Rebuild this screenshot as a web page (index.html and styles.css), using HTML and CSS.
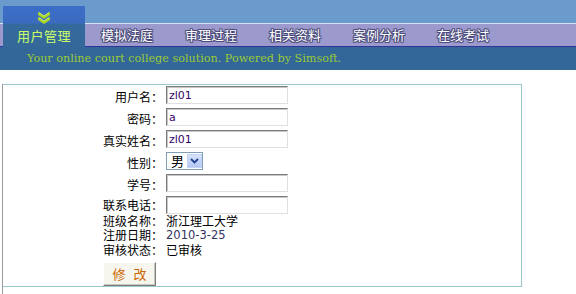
FILE: index.html
```html
<!DOCTYPE html>
<html lang="zh-CN">
<head>
<meta charset="utf-8">
<title>用户管理</title>
<link rel="stylesheet" href="styles.css">
</head>
<body>
<div class="header">
  <div class="nav">
    <div class="tab">
      <svg class="chev" width="16" height="13" viewBox="0 0 16 13">
        <path d="M2 1 L8 5 L14 1 L14 4 L8 8 L2 4 Z" fill="#a8d81e"/>
        <path d="M2 6 L8 10 L14 6 L14 9 L8 13 L2 9 Z" fill="#a8d81e"/>
        <path d="M3 1.5 L8 5 L13 1.5" fill="none" stroke="#e8ff80" stroke-width="0.8"/>
        <path d="M3 6.5 L8 10 L13 6.5" fill="none" stroke="#e8ff80" stroke-width="0.8"/>
      </svg>
      <span class="tab-text">用户管理</span>
    </div>
    <ul class="menu">
      <li>模拟法庭</li>
      <li>审理过程</li>
      <li>相关资料</li>
      <li>案例分析</li>
      <li>在线考试</li>
    </ul>
  </div>
  <div class="slogan">Your online court college solution. Powered by Simsoft.</div>
</div>
<div class="main">
  <div class="box">
    <table class="form">
      <tr class="in"><td class="l">用户名：</td><td><input class="txt" type="text" value="zl01"></td></tr>
      <tr class="in"><td class="l">密码：</td><td><input class="txt" type="text" value="a"></td></tr>
      <tr class="in"><td class="l">真实姓名：</td><td><input class="txt" type="text" value="zl01"></td></tr>
      <tr class="in"><td class="l">性别：</td><td><span class="sel"><span class="sel-v">男</span><span class="sel-b"><svg width="9" height="6" viewBox="0 0 9 6"><path d="M1 1 L4.5 4.5 L8 1" fill="none" stroke="#1f3f8f" stroke-width="1.8"/></svg></span></span></td></tr>
      <tr class="in"><td class="l">学号：</td><td><input class="txt" type="text" value=""></td></tr>
      <tr class="in last"><td class="l">联系电话：</td><td><input class="txt" type="text" value=""></td></tr>
      <tr class="tx r1"><td class="l"><span class="cell">班级名称：</span></td><td><span class="cell">浙江理工大学</span></td></tr>
      <tr class="tx"><td class="l"><span class="cell">注册日期：</span></td><td class="date"><span class="cell">2010-3-25</span></td></tr>
      <tr class="tx"><td class="l"><span class="cell">审核状态：</span></td><td><span class="cell">已审核</span></td></tr>
      <tr><td colspan="2" class="btn-cell"><button class="btn" type="button">修 改</button></td></tr>
    </table>
  </div>
</div>
</body>
</html>
```
FILE: styles.css
```css
html, body {
  margin: 0;
  padding: 0;
  background: #ffffff;
}
body {
  font-family: "Noto Sans CJK SC", "DejaVu Sans", sans-serif;
  font-size: 12px;
  color: #000;
  width: 576px;
  height: 294px;
  overflow: hidden;
}
.header {
  width: 576px;
}
.nav {
  display: flex;
  align-items: flex-end;
  height: 47px;
  padding-left: 3px;
  box-sizing: border-box;
  background: linear-gradient(to bottom,
    #6a9bcc 0, #6a9bcc 23px,
    #d2e2f2 23px, #d2e2f2 24px,
    #9c9acc 24px, #9c9acc 46px,
    #333399 46px, #333399 47px);
}
.tab {
  width: 82px;
  height: 41px;
  display: flex;
  flex-direction: column;
  align-items: center;
  background: linear-gradient(to bottom, #3c6ec8 0, #3a6bc0 17px, #356a9e 18px, #346899 41px);
}
.chev {
  margin-top: 5px;
  display: block;
}
.tab-text {
  margin-top: 4px;
  font-size: 13px;
  line-height: 15px;
  color: #ccff66;
  letter-spacing: 0.5px;
}
.menu {
  list-style: none;
  margin: 0 0 1px 16px;
  padding: 0;
  display: flex;
  height: 22px;
}
.menu li {
  width: 84px;
  font-size: 13px;
  line-height: 22px;
  color: #ffffff;
  text-shadow: 1px 0 0 #4a4a7a, -1px 0 0 #4a4a7a, 0 1px 0 #4a4a7a, 0 -1px 0 #4a4a7a, 1px 1px 0 #5a5a88, -1px -1px 0 #5a5a88, 1px -1px 0 #5a5a88, -1px 1px 0 #5a5a88;
}
.slogan {
  height: 23px;
  background: #336699;
  padding-left: 27px;
  font-family: "DejaVu Serif", "Liberation Serif", serif;
  font-size: 11.2px;
  line-height: 23px;
  color: #99cc33;
}
.main {
  margin: 14px 0 0 2px;
  border-left: 1px solid #9a9a9a;
  height: 210px;
}
.box {
  width: 418px;
  padding-left: 100px;
  border-top: 1px solid #99c9cc;
  border-right: 1px solid #99c9cc;
  border-bottom: 1px solid #99c9cc;
}
.form {
  border-collapse: collapse;
  border-spacing: 0;
}
.form td {
  padding: 0;
  white-space: nowrap;
}
.form td.l {
  width: 60px;
  padding-right: 3px;
  text-align: right;
}
.form tr.in td {
  height: 22px;
  vertical-align: top;
  padding-top: 1px;
  box-sizing: border-box;
}
.form tr.in td.l {
  vertical-align: middle;
  padding-top: 0;
}
.form tr.in.last td {
  height: 19px;
}
.form tr.tx td {
  height: 15px;
  line-height: 15px;
  vertical-align: top;
}
.form tr.tx.r1 td {
  height: 14px;
  line-height: 14px;
}
.cell {
  display: inline-block;
  height: 14px;
  line-height: 14px;
  vertical-align: top;
}
.form td.date {
  font-family: "DejaVu Sans", sans-serif;
  font-size: 11.5px;
  color: #33335f;
}
.txt {
  display: block;
  box-sizing: border-box;
  width: 122px;
  height: 18px;
  margin: 0;
  padding: 1px 2px 0;
  border: 1px solid;
  border-color: #7a7a7a #e0e0e0 #e0e0e0 #7a7a7a;
  box-shadow: inset 1px 1px 0 #c8c8c8;
  font-family: "DejaVu Sans", sans-serif;
  font-size: 11px;
  color: #330066;
  background: #fff;
  outline: none;
}
.sel {
  display: flex;
  align-items: center;
  box-sizing: border-box;
  width: 37px;
  height: 18px;
  border: 1px solid #7f9db9;
  background: #fff;
}
.sel-v {
  font-size: 13px;
  line-height: 16px;
  padding-left: 4px;
  width: 16px;
}
.sel-b {
  display: flex;
  align-items: center;
  justify-content: center;
  width: 15px;
  height: 14px;
  background: linear-gradient(#d6e2fb, #b4c8f4);
  border: 1px solid #c4d3f5;
  box-sizing: border-box;
}
.btn-cell {
  height: 28px;
  line-height: 0;
  vertical-align: bottom;
}
.btn {
  display: block;
  box-sizing: border-box;
  width: 53px;
  height: 24px;
  margin: 0;
  padding: 0;
  border: 1px solid;
  border-color: #ffffff #7c7c7c #7c7c7c #ffffff;
  box-shadow: inset -1px -1px 0 #c8c8c0;
  background: #f6f6ee;
  font-family: "Noto Sans CJK SC", sans-serif;
  font-size: 13px;
  line-height: 22px;
  word-spacing: 5px;
  color: #cc6600;
}
```
